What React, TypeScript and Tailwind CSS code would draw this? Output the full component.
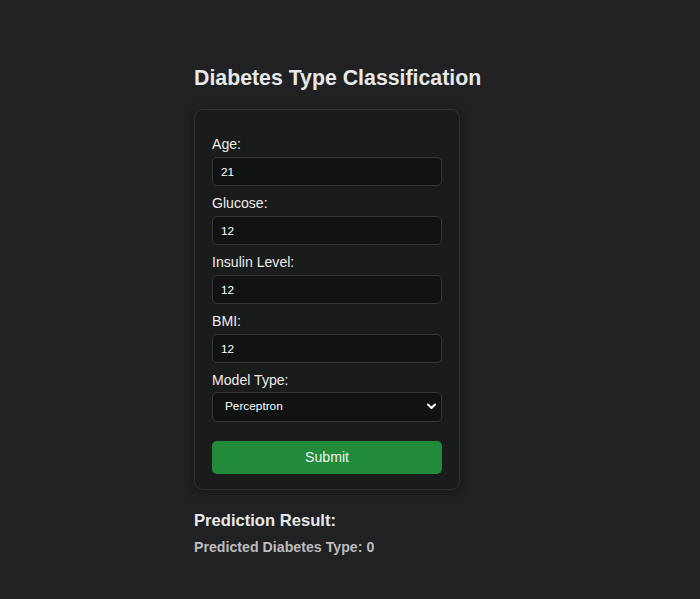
import React, { useState } from "react";

export default function App() {
  const [age, setAge] = useState("21");
  const [glucose, setGlucose] = useState("12");
  const [insulin, setInsulin] = useState("12");
  const [bmi, setBmi] = useState("12");
  const [model, setModel] = useState("Perceptron");

  const inputCls =
    "block w-full h-[29px] rounded-[5px] border border-[#353737] bg-[#111212] pl-[8px] text-[11.8px] text-white outline-none";

  const fields: { label: string; value: string; set: (v: string) => void }[] = [
    { label: "Age:", value: age, set: setAge },
    { label: "Glucose:", value: glucose, set: setGlucose },
    { label: "Insulin Level:", value: insulin, set: setInsulin },
    { label: "BMI:", value: bmi, set: setBmi },
  ];

  return (
    <div
      className="min-h-[599px] w-full bg-[#202122] text-[#e8e8e8]"
      style={{ fontFamily: '"Liberation Sans", Arial, Helvetica, sans-serif' }}
    >
      <div className="mx-auto w-[312px] pt-[66px]">
        <h2 className="text-[21.3px] font-bold leading-[24px] text-[#e8e8e8]">
          Diabetes Type Classification
        </h2>
        <form
          className="mt-[19px] w-[266px] rounded-[9px] border border-[#323434] bg-[#1a1b1b] px-[17px] pb-[15px] pt-[26px] shadow-[0_2px_10px_rgba(0,0,0,0.35)]"
          onSubmit={(e) => e.preventDefault()}
        >
          {fields.map((f) => (
            <div key={f.label} className="mb-[9px]">
              <label className="block text-[14.1px] leading-[16px] text-[#ececec]">
                {f.label}
              </label>
              <input
                className={inputCls + " mt-[5px]"}
                value={f.value}
                onChange={(e) => f.set(e.target.value)}
              />
            </div>
          ))}
          <div>
            <label className="block text-[14.1px] leading-[16px] text-[#ececec]">
              Model Type:
            </label>
            <div className="relative mt-[4px]">
              <select
                className="block h-[30px] w-full appearance-none rounded-[5px] border border-[#353737] bg-[#111212] pl-[12px] text-[11.8px] text-white outline-none"
                value={model}
                onChange={(e) => setModel(e.target.value)}
              >
                <option>Perceptron</option>
                <option>Logistic Regression</option>
              </select>
              <svg
                className="pointer-events-none absolute right-[6px] top-[11px]"
                width="9"
                height="7"
                viewBox="0 0 9 7"
              >
                <path
                  d="M1 1.5 L4.5 5 L8 1.5"
                  fill="none"
                  stroke="#ffffff"
                  strokeWidth="2"
                  strokeLinecap="round"
                  strokeLinejoin="round"
                />
              </svg>
            </div>
          </div>
          <button
            type="submit"
            className="mt-[19px] block h-[33px] w-full rounded-[5px] bg-[#228a3b] text-[14.1px] text-[#eef5ef]"
          >
            Submit
          </button>
        </form>
        <h3 className="mt-[21px] text-[16.6px] font-bold leading-[19px] text-[#e8e8e8]">
          Prediction Result:
        </h3>
        <p className="mt-[9px] text-[14.2px] font-bold leading-[16px] text-[#bcbcbc]">
          Predicted Diabetes Type: 0
        </p>
      </div>
    </div>
  );
}
